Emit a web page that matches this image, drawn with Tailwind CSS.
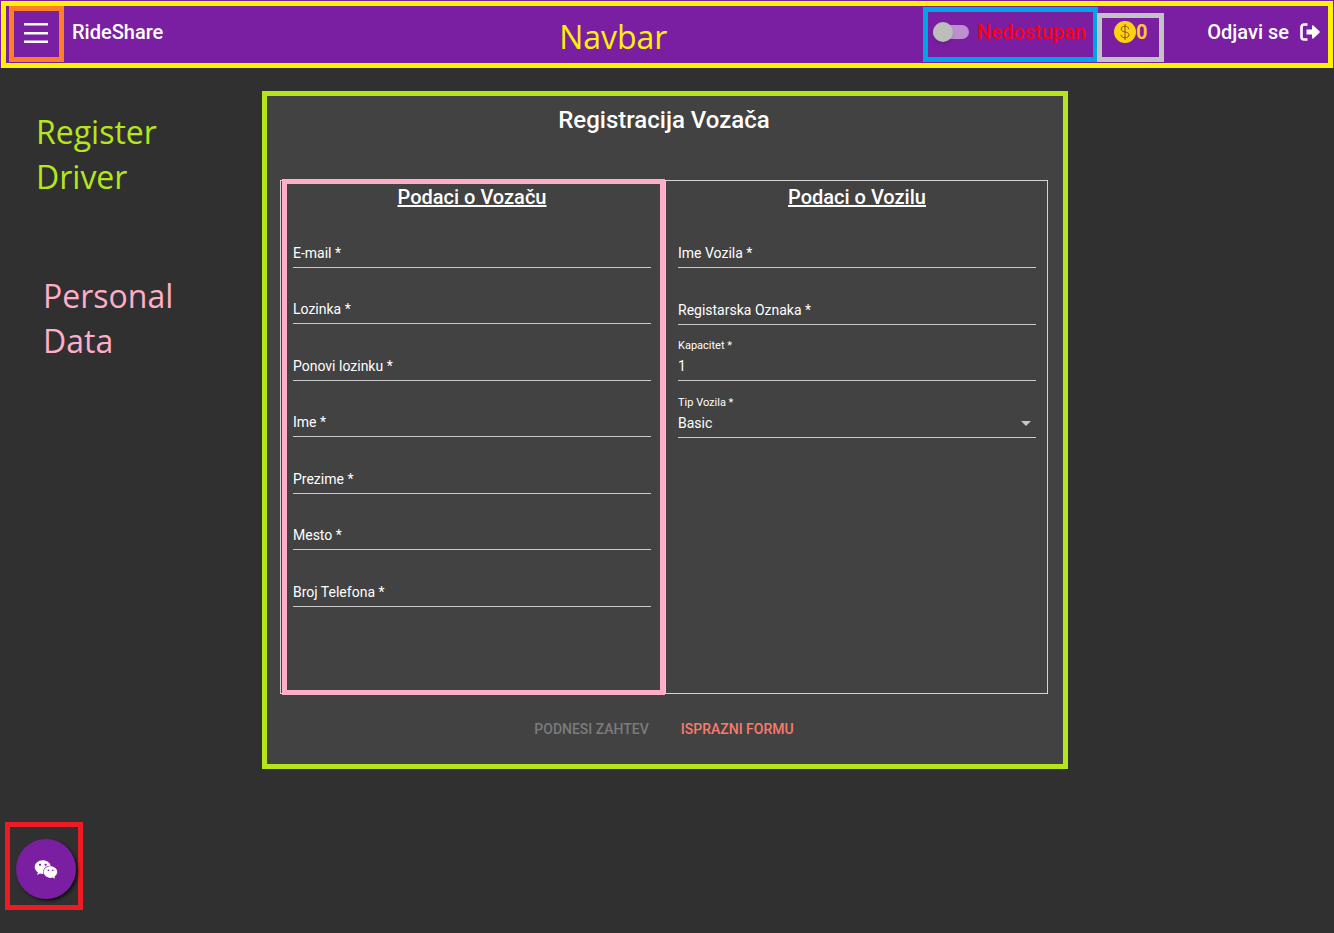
<!DOCTYPE html>
<html lang="sr">
<head>
<meta charset="utf-8">
<title>RideShare</title>
<script src="https://cdn.jsdelivr.net/npm/@tailwindcss/browser@4"></script>
</head>
<body class="min-h-screen bg-[#303030] font-[Roboto,sans-serif] text-white">
<header class="bg-[#7b1fa2] pt-px px-px">
  <div class="flex h-[67px] items-start border-5 border-[#fff200] pl-[3px]">
    <button type="button" aria-label="Meni" class="flex h-14 w-[55px] shrink-0 items-center justify-center border-5 border-[#ff7f27] pb-0.5 pr-px">
      <svg class="h-6 w-6" viewBox="0 0 24 24" fill="#fff"><path d="M0 2h24v2.500H0zM0 11h24v2.500H0zM0 19.500h24V22H0z"/></svg>
    </button>
    <a href="#" class="ml-2 text-xl font-medium leading-[52px]">RideShare</a>
    <span class="flex-1 pl-[140px] pt-2 text-center font-['Open_Sans',sans-serif] text-[32px] leading-[45px] text-[#fff200]">Navbar</span>
    <label class="mt-px flex h-[55px] w-[175px] shrink-0 items-center border-5 border-[#00a2e8] pl-[5px] pb-[5px] text-xl font-medium text-[#fa0018]">
      <input type="checkbox" role="switch" class="mr-2 flex h-[14px] w-9 appearance-none items-center rounded-full bg-[#bd8fd1] before:block before:h-5 before:w-5 before:shrink-0 before:rounded-full before:bg-[#bdbdbd] before:shadow-md">
      Nedostupan
    </label>
    <div class="-ml-px mt-[7px] flex h-[49px] w-[67px] shrink-0 items-center justify-center border-5 border-[#c3c3c3] pb-[11px] text-xl font-bold text-[#ffc82c]">
      <svg class="h-[22px] w-[22px]" viewBox="0 0 22 22"><circle cx="11" cy="11" r="11" fill="#ffd210"/><path d="M14.700 8C14.400 6.200 12.900 5.300 11 5.300c-2.200 0-3.800 1.100-3.800 2.800C7.200 11.700 15 10.200 15 13.800c0 1.900-1.700 2.900-4 2.900s-3.900-1-4.100-2.900M11 3v16" fill="none" stroke="#8a5030" stroke-width="1"/></svg>
      <span>0</span>
    </div>
    <a href="#" class="ml-[43px] mr-2 flex items-center text-xl font-medium leading-[52px]">Odjavi se
      <svg class="ml-[11px] h-[18px] w-5" viewBox="0 0 20 18"><path d="M7.500 1.500H4A2.500 2.500 0 0 0 1.500 4v10A2.500 2.500 0 0 0 4 16.500h3.500" fill="none" stroke="#fff" stroke-width="2.600"/><path d="M6.500 6.500H12V3.200c0-.8.900-1.100 1.400-.6l6.100 5.700c.4.400.4 1 0 1.400l-6.100 5.700c-.5.500-1.400.2-1.400-.6v-3.300H6.500z" fill="#fff"/></svg>
    </a>
  </div>
</header>

<main class="grid grid-cols-[1fr_806px_1fr] items-start pr-1">
  <aside class="flex flex-col gap-[74px] pl-9 pt-[41px] font-['Open_Sans',sans-serif] text-[32px] leading-[45px]">
    <p class="text-[#b5e61d]">Register<br>Driver</p>
    <p class="pl-[7px] text-[#ffaec9]">Personal<br>Data</p>
  </aside>

  <form class="mt-[23px] border-5 border-[#b5e61d] bg-[#424242] pb-[17px] pl-[13px] pr-[15px] pt-2">
    <h1 class="mb-11 text-center text-2xl font-medium leading-8">Registracija Vozača</h1>
    <div class="grid grid-cols-2 border border-[#d5d5d5]">
      <section class="-my-0.5 -mr-px ml-px border-5 border-[#ffaec9] pb-[83px] pl-1.5 pr-[9px]">
        <h2 class="h-[27px] text-center text-xl font-medium leading-[26px] underline">Podaci o Vozaču</h2>
        <div class="grid h-[396px] auto-rows-fr text-sm">
          <div class="grid content-end border-b border-[#cacaca] pb-1"><label for="email" class="col-start-1 row-start-1 leading-5">E-mail *</label><input id="email" type="email" class="col-start-1 row-start-1 h-5 outline-none"></div>
          <div class="grid content-end border-b border-[#cacaca] pb-1"><label for="pw" class="col-start-1 row-start-1 leading-5">Lozinka *</label><input id="pw" type="password" class="col-start-1 row-start-1 h-5 outline-none"></div>
          <div class="grid content-end border-b border-[#cacaca] pb-1"><label for="pw2" class="col-start-1 row-start-1 leading-5">Ponovi lozinku *</label><input id="pw2" type="password" class="col-start-1 row-start-1 h-5 outline-none"></div>
          <div class="grid content-end border-b border-[#cacaca] pb-1"><label for="ime" class="col-start-1 row-start-1 leading-5">Ime *</label><input id="ime" type="text" class="col-start-1 row-start-1 h-5 outline-none"></div>
          <div class="grid content-end border-b border-[#cacaca] pb-1"><label for="prezime" class="col-start-1 row-start-1 leading-5">Prezime *</label><input id="prezime" type="text" class="col-start-1 row-start-1 h-5 outline-none"></div>
          <div class="grid content-end border-b border-[#cacaca] pb-1"><label for="mesto" class="col-start-1 row-start-1 leading-5">Mesto *</label><input id="mesto" type="text" class="col-start-1 row-start-1 h-5 outline-none"></div>
          <div class="grid content-end border-b border-[#cacaca] pb-1"><label for="tel" class="col-start-1 row-start-1 leading-5">Broj Telefona *</label><input id="tel" type="tel" class="col-start-1 row-start-1 h-5 outline-none"></div>
        </div>
      </section>
      <section class="ml-px border-l border-[#d5d5d5] pl-3 pr-[11px] pt-[3px]">
        <h2 class="h-[27px] text-center text-xl font-medium leading-[26px] underline">Podaci o Vozilu</h2>
        <div class="grid h-[227px] auto-rows-fr text-sm">
          <div class="grid content-end border-b border-[#cacaca] pb-1"><label for="vozilo" class="col-start-1 row-start-1 leading-5">Ime Vozila *</label><input id="vozilo" type="text" class="col-start-1 row-start-1 h-5 outline-none"></div>
          <div class="grid content-end border-b border-[#cacaca] pb-1"><label for="reg" class="col-start-1 row-start-1 leading-5">Registarska Oznaka *</label><input id="reg" type="text" class="col-start-1 row-start-1 h-5 outline-none"></div>
          <div class="grid content-end border-b border-[#cacaca] pb-1"><label for="kap" class="text-[11px] leading-5">Kapacitet *</label><input id="kap" type="text" inputmode="numeric" value="1" class="h-5 outline-none"></div>
          <div class="grid content-end border-b border-[#cacaca] pb-1"><label for="tip" class="text-[11px] leading-5">Tip Vozila *</label>
            <div class="grid items-center">
              <select id="tip" class="col-start-1 row-start-1 h-5 appearance-none outline-none"><option>Basic</option></select>
              <svg class="pointer-events-none col-start-1 row-start-1 mr-[5px] h-[5px] w-2.5 justify-self-end" viewBox="0 0 10 5"><path d="M0 0h10L5 5z" fill="#c6c6c6"/></svg>
            </div>
          </div>
        </div>
      </section>
    </div>
    <div class="mt-[17px] flex justify-center text-sm font-medium leading-9">
      <button type="button" disabled class="px-4 text-[#7b7b7b]">PODNESI ZAHTEV</button>
      <button type="reset" class="px-4 text-[#fa7b6c]">ISPRAZNI FORMU</button>
    </div>
  </form>
</main>

<div class="fixed bottom-[23px] left-[5px] flex h-[88px] w-[78px] items-center border-5 border-[#ed1c24] pl-1.5 pt-1.5">
  <button type="button" aria-label="Poruke" class="flex h-[60px] w-[60px] shrink-0 items-center justify-center rounded-full bg-[#7b1fa2] shadow-[2px_2px_3px_#111]">
    <svg class="h-[21px] w-6" viewBox="0 0 576 512" fill="#fff"><path d="M385.200 167.600c6.400 0 12.600.3 18.800 1.100C387.400 90.300 303.300 32 207.700 32 100.500 32 13 104.800 13 197.400c0 53.400 29.300 97.500 77.900 131.600l-19.300 58.600 68-34.100c24.400 4.800 43.800 9.700 68.200 9.700 6.200 0 12.100-.3 18.300-.8-4-12.900-6.200-26.600-6.200-40.800-.1-84.900 72.900-154 165.300-154zm-104.500-52.900c14.500 0 24.200 9.700 24.200 24.400 0 14.500-9.700 24.200-24.200 24.200-14.800 0-29.300-9.700-29.300-24.200.1-14.700 14.600-24.400 29.300-24.400zm-136.400 48.600c-14.500 0-29.300-9.700-29.300-24.200 0-14.800 14.800-24.400 29.300-24.400 14.800 0 24.400 9.700 24.400 24.400 0 14.600-9.600 24.200-24.400 24.200zM563 319.400c0-77.900-77.900-141.300-165.400-141.300-92.700 0-165.400 63.400-165.400 141.300S305 460.700 397.600 460.700c19.300 0 38.900-5.100 58.600-9.900l53.400 29.300-14.800-48.600C534 402.100 563 363.200 563 319.400zm-219.100-24.500c-9.700 0-19.300-9.700-19.300-19.600 0-9.700 9.700-19.300 19.300-19.300 14.800 0 24.400 9.700 24.400 19.300 0 10-9.700 19.600-24.400 19.600zm107.100 0c-9.700 0-19.300-9.700-19.300-19.600 0-9.700 9.700-19.300 19.300-19.300 14.500 0 24.400 9.700 24.400 19.300 0 10-9.900 19.600-24.400 19.600z"/></svg>
  </button>
</div>
</body>
</html>
